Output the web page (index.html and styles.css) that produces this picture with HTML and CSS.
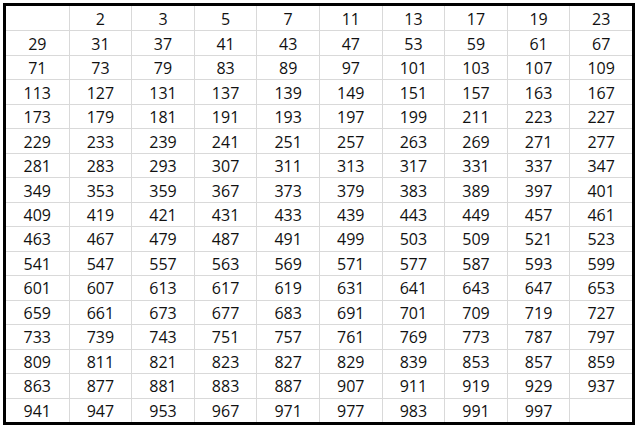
FILE: index.html
```html
<!DOCTYPE html>
<html lang="en">
<head>
<meta charset="utf-8">
<title>Primes</title>
<link rel="stylesheet" href="styles.css">
</head>
<body>
<div class="sheet">
<div class="c"></div><div class="c">2</div><div class="c">3</div><div class="c">5</div><div class="c">7</div><div class="c">11</div><div class="c">13</div><div class="c">17</div><div class="c">19</div><div class="c">23</div>
<div class="c">29</div><div class="c">31</div><div class="c">37</div><div class="c">41</div><div class="c">43</div><div class="c">47</div><div class="c">53</div><div class="c">59</div><div class="c">61</div><div class="c">67</div>
<div class="c">71</div><div class="c">73</div><div class="c">79</div><div class="c">83</div><div class="c">89</div><div class="c">97</div><div class="c">101</div><div class="c">103</div><div class="c">107</div><div class="c">109</div>
<div class="c">113</div><div class="c">127</div><div class="c">131</div><div class="c">137</div><div class="c">139</div><div class="c">149</div><div class="c">151</div><div class="c">157</div><div class="c">163</div><div class="c">167</div>
<div class="c">173</div><div class="c">179</div><div class="c">181</div><div class="c">191</div><div class="c">193</div><div class="c">197</div><div class="c">199</div><div class="c">211</div><div class="c">223</div><div class="c">227</div>
<div class="c">229</div><div class="c">233</div><div class="c">239</div><div class="c">241</div><div class="c">251</div><div class="c">257</div><div class="c">263</div><div class="c">269</div><div class="c">271</div><div class="c">277</div>
<div class="c">281</div><div class="c">283</div><div class="c">293</div><div class="c">307</div><div class="c">311</div><div class="c">313</div><div class="c">317</div><div class="c">331</div><div class="c">337</div><div class="c">347</div>
<div class="c">349</div><div class="c">353</div><div class="c">359</div><div class="c">367</div><div class="c">373</div><div class="c">379</div><div class="c">383</div><div class="c">389</div><div class="c">397</div><div class="c">401</div>
<div class="c">409</div><div class="c">419</div><div class="c">421</div><div class="c">431</div><div class="c">433</div><div class="c">439</div><div class="c">443</div><div class="c">449</div><div class="c">457</div><div class="c">461</div>
<div class="c">463</div><div class="c">467</div><div class="c">479</div><div class="c">487</div><div class="c">491</div><div class="c">499</div><div class="c">503</div><div class="c">509</div><div class="c">521</div><div class="c">523</div>
<div class="c">541</div><div class="c">547</div><div class="c">557</div><div class="c">563</div><div class="c">569</div><div class="c">571</div><div class="c">577</div><div class="c">587</div><div class="c">593</div><div class="c">599</div>
<div class="c">601</div><div class="c">607</div><div class="c">613</div><div class="c">617</div><div class="c">619</div><div class="c">631</div><div class="c">641</div><div class="c">643</div><div class="c">647</div><div class="c">653</div>
<div class="c">659</div><div class="c">661</div><div class="c">673</div><div class="c">677</div><div class="c">683</div><div class="c">691</div><div class="c">701</div><div class="c">709</div><div class="c">719</div><div class="c">727</div>
<div class="c">733</div><div class="c">739</div><div class="c">743</div><div class="c">751</div><div class="c">757</div><div class="c">761</div><div class="c">769</div><div class="c">773</div><div class="c">787</div><div class="c">797</div>
<div class="c">809</div><div class="c">811</div><div class="c">821</div><div class="c">823</div><div class="c">827</div><div class="c">829</div><div class="c">839</div><div class="c">853</div><div class="c">857</div><div class="c">859</div>
<div class="c">863</div><div class="c">877</div><div class="c">881</div><div class="c">883</div><div class="c">887</div><div class="c">907</div><div class="c">911</div><div class="c">919</div><div class="c">929</div><div class="c">937</div>
<div class="c">941</div><div class="c">947</div><div class="c">953</div><div class="c">967</div><div class="c">971</div><div class="c">977</div><div class="c">983</div><div class="c">991</div><div class="c">997</div><div class="c"></div>
</div>
</body>
</html>
```
FILE: styles.css
```css
html, body {
  margin: 0;
  padding: 0;
  background: #ffffff;
}
body {
  padding: 3px;
}
.sheet {
  box-sizing: border-box;
  width: 632px;
  height: 422px;
  border: 3px solid #000000;
  display: grid;
  grid-template-columns: repeat(10, 1fr);
  grid-template-rows: repeat(17, 1fr);
  font-family: "Open Sans", "Noto Sans", sans-serif;
  font-size: 16px;
  color: #111111;
}
.c {
  box-sizing: border-box;
  display: flex;
  align-items: center;
  justify-content: center;
  border-left: 1px solid #d9d9d9;
  border-top: 1px solid #d9d9d9;
  line-height: 1;
  padding-top: 1px;
}
.c:nth-child(10n+1) {
  border-left: none;
}
.c:nth-child(-n+10) {
  border-top: none;
}
```
